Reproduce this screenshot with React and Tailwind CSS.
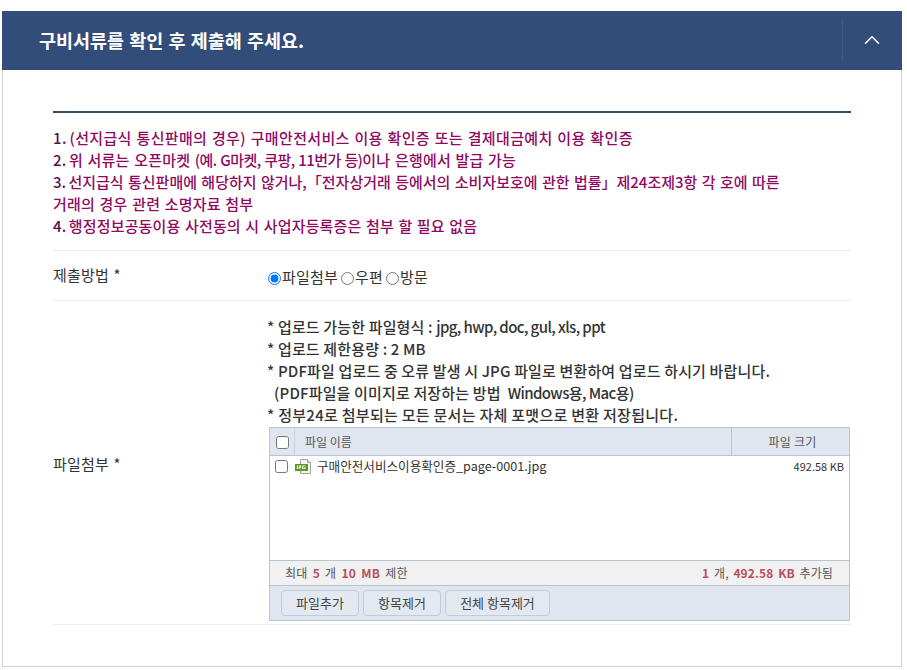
import React from 'react'
import { ChevronUp } from 'lucide-react'

const FONT = "font-['Noto_Sans_CJK_KR','Noto_Sans',sans-serif]"
const GRID = "font-['Noto_Sans_CJK_KR','Liberation_Sans',sans-serif]"

// Latin runs are set tighter: the Korean and Latin widths differ from the original font
function Tight({ children }) {
  return <span className="tracking-[-0.6px]">{children}</span>
}

function Radio({ label, checked }) {
  return (
    <label className="flex items-center">
      <input type="radio" name="method" defaultChecked={checked} className="m-0 mt-[3px] h-[13px] w-[13px] accent-[#0075ff]" />
      <span className="ml-px mr-[3px]">{label}</span>
    </label>
  )
}

function JpgIcon() {
  return (
    <svg width="17" height="15" viewBox="0 0 17 15" className="shrink-0">
      <path d="M5.5 .5h7l3 3v11h-10z" fill="#f4f4ee" stroke="#a3a89a" />
      <path d="M12.5 .5v3h3" fill="#ddd" stroke="#a3a89a" />
      <rect x="0" y="5" width="13" height="7" fill="#5c9a1e" />
      <path d="M2 6.5h1.2v3.6h-1.6v-.8h.4zM4.2 6.5h2v2.3h-1v1.3h-1zM7.2 6.5h3.3v.8h-2.2v2h1.1v-1h1.1v1.8h-3.3z" fill="#fff" />
    </svg>
  )
}

function GridButton({ children, width }) {
  return (
    <button type="button" className={`h-[26px] rounded-[4px] border border-[#c3ccd9] bg-[#e3e9f1] text-[13px] text-[#444] ${width}`}>
      {children}
    </button>
  )
}

function Num({ children }) {
  return <span className="[word-spacing:-1px] text-[#5a1050]">{children} </span>
}

export default function App() {
  return (
    <div className={`min-h-[670px] bg-white pl-[2px] pr-[5px] pt-[11px] ${FONT}`}>
      <div className="flex h-[59px] items-stretch bg-[#334d7a] pt-[9px]">
        <h2 className="flex-1 pb-[9px] pl-[37px] text-[18.5px] leading-[41px] font-bold [word-spacing:1px] text-white">
          구비서류를 확인 후 제출해 주세요.
        </h2>
        <div className="mb-[9px] flex w-[60px] items-center justify-center border-l border-[#40597f] pb-[1px] pr-[1px]">
          <ChevronUp size={26} strokeWidth={1.5} className="text-white" />
        </div>
      </div>

      <div className="h-[597px] border-x border-b border-[#cfd2d6] border-t-[#c9d3e6] px-[50px] pt-[41px]">
        <div className="border-t-2 border-[#334d6e] pt-[14px]">
          <div className="border-b border-[#eeeeee] pb-[13px] text-[15px] leading-[22px] font-medium [word-spacing:1px] text-[#8e0b5f]">
            <p className="tracking-[0.35px]"><Num>1.</Num>(선지급식 통신판매의 경우) 구매안전서비스 이용 확인증 또는 결제대금예치 이용 확인증</p>
            <p className="tracking-[0.2px]"><Num>2.</Num>위 서류는 오픈마켓 <Tight>(예. G마켓, 쿠팡, 11번가 등)</Tight>이나 은행에서 발급 가능</p>
            <p>
              <Num>3.</Num>선지급식 통신판매에 해당하지 않거나,「전자상거래 등에서의 소비자보호에 관한 법률」제24조제3항 각 호에 따른
            </p>
            <p className="tracking-[0.2px]">거래의 경우 관련 소명자료 첨부</p>
            <p className="tracking-[0.15px]"><Num>4.</Num>행정정보공동이용 사전동의 시 사업자등록증은 첨부 할 필요 없음</p>
          </div>

          <div className="flex h-[50px] items-center border-b border-[#eeeeee] text-[15px] tracking-[0.2px] [word-spacing:1px] text-[#333]">
            <div className="w-[215px]">제출방법 *</div>
            <div className="flex items-center pt-[3px]">
              <Radio label="파일첨부" checked />
              <Radio label="우편" />
              <Radio label="방문" />
            </div>
          </div>

          <div className="flex border-b border-[#eeeeee] pb-[3px]">
            <div className="flex w-[216px] items-center pt-[6px] text-[15px] tracking-[0.2px] [word-spacing:1px] text-[#333]">파일첨부 *</div>
            <div className="w-[581px] pt-[15px]">
              <div className="-ml-[2px] text-[15px] leading-[22px] font-medium tracking-[0.15px] text-[#333]">
                <p>* 업로드 가능한 파일형식 : <Tight>jpg, hwp, doc, gul, xls, ppt</Tight></p>
                <p>* 업로드 제한용량 : 2 MB</p>
                <p>* PDF파일 업로드 중 오류 발생 시 JPG 파일로 변환하여 업로드 하시기 바랍니다.</p>
                <p>{'\u00a0\u00a0'}(PDF파일을 이미지로 저장하는 방법{'\u00a0\u00a0'}<Tight>Windows용, Mac용</Tight>)</p>
                <p className="tracking-[0.28px]">* 정부24로 첨부되는 모든 문서는 자체 포맷으로 변환 저장됩니다.</p>
              </div>

              <div className={`mt-[1px] border border-[#b9c4d2] text-[12px] text-[#333] ${GRID}`}>
                <div className="flex h-[28px] border-b border-[#b9c4d2] bg-[#dfe6f0]">
                  <div className="flex w-[25px] items-center justify-center border-r border-[#c8d1dd] pt-[2px]">
                    <input type="checkbox" className="m-0 h-[13px] w-[13px]" />
                  </div>
                  <div className="flex flex-1 items-center pl-[10px] pt-[1px] text-[#555]">파일 이름</div>
                  <div className="flex w-[118px] items-center justify-center border-l border-[#b9c4d2] pl-[4px] pt-[1px] tracking-[0.2px] text-[#555]">파일 크기</div>
                </div>
                <div className="h-[104px] bg-white pt-[1px]">
                  <div className="flex items-center pl-[5px] pr-[5px]">
                    <input type="checkbox" className="m-0 h-[13px] w-[13px]" />
                    <span className="ml-[7px]"><JpgIcon /></span>
                    <span className="ml-[5px] flex-1 text-[12.6px]">구매안전서비스이용확인증_page-0001.jpg</span>
                    <span className="text-[11px]">492.58 KB</span>
                  </div>
                </div>
                <div className="flex h-[26px] items-center justify-between border-y border-[#b9c4d2] bg-[#f1f1f1] pl-[15px] pr-[16px] text-[#555] [word-spacing:2px] tracking-[0.3px]">
                  <span>
                    최대 <b className="text-[#b8505f]">5</b> 개 <b className="text-[#b8505f]">10 MB</b> 제한
                  </span>
                  <span className="tracking-[0.1px]">
                    <b className="text-[#b8505f]">1</b> 개, <b className="text-[#b8505f]">492.58 KB</b> 추가됨
                  </span>
                </div>
                <div className="flex h-[34px] items-center gap-[4px] bg-[#dfe6f0] pl-[11px]">
                  <GridButton width="w-[78px]">파일추가</GridButton>
                  <GridButton width="w-[78px]">항목제거</GridButton>
                  <GridButton width="w-[105px]">전체 항목제거</GridButton>
                </div>
              </div>
            </div>
          </div>
        </div>
      </div>
    </div>
  )
}
